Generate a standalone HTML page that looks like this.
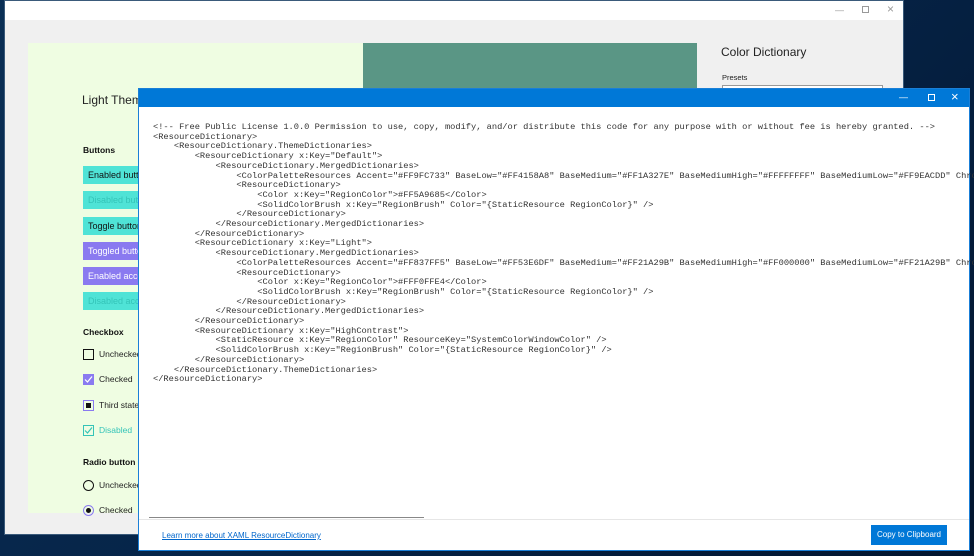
<!DOCTYPE html>
<html><head><meta charset="utf-8"><style>
*{margin:0;padding:0;box-sizing:border-box}
body{width:974px;height:556px;overflow:hidden;background:linear-gradient(135deg,#0a2f55 0%,#062448 50%,#03152e 100%);font-family:"Liberation Sans",sans-serif;position:relative}
.abs{position:absolute}
#back{left:4px;top:0;width:900px;height:535px;background:#f0f0f0;border:1px solid #3a5a7a}
#backtitle{left:0;top:0;width:100%;height:19px;background:#fff}
#green{left:23px;top:42px;width:335px;height:470px;background:#effde2}
#teal{left:358px;top:42px;width:334px;height:230px;background:#5a9685}
.btn{position:absolute;left:78px;width:70px;height:18px;font-size:9px;line-height:18px;padding-left:5px;color:#111;white-space:nowrap;overflow:hidden}
.t{background:#4fe3d6}.p{background:#8a7af0;color:#fff}.d{color:#34c4b8}
.lbl{position:absolute;left:78px;font-size:8.5px;color:#111;font-weight:bold}
.cb{position:absolute;left:78px;font-size:8.5px;color:#222;white-space:nowrap}
.box{display:inline-block;width:11px;height:11px;border:1.5px solid #111;vertical-align:middle;margin-right:5px;position:relative}
.box svg{position:absolute;left:0;top:0}
#front{left:138px;top:88px;width:832px;height:463px;background:#fff;border:1px solid #1a7fd7}
#ftitle{left:0;top:0;width:100%;height:18px;background:#0078d7}
pre{position:absolute;left:14px;top:34px;font-family:"Liberation Mono",monospace;font-size:8.7px;line-height:9.7px;color:#333;white-space:pre}
</style></head><body>
<div id="back" class="abs">
 <div id="backtitle" class="abs"></div>
 <div class="abs" style="left:830px;top:4px;font-size:9px;color:#999">—</div>
 <div class="abs" style="left:857px;top:5px;width:7px;height:7px;border:1px solid #999"></div>
 <div class="abs" style="left:882px;top:1px;font-size:12px;color:#999">×</div>
 <div id="green" class="abs"></div>
 <div id="teal" class="abs"></div>
 <div class="abs" style="left:716px;top:44px;font-size:12px;color:#222">Color Dictionary</div>
 <div class="abs" style="left:717px;top:72px;font-size:7.5px;color:#222">Presets</div>
 <div class="abs" style="left:717px;top:84px;width:161px;height:10px;border:1px solid #999;background:#fff"></div>
 <div class="abs" style="left:77px;top:92px;font-size:12px;color:#222">Light Theme</div>
 <div class="lbl" style="top:144px">Buttons</div>
 <div class="btn t" style="top:165px">Enabled button</div>
 <div class="btn t d" style="top:190px">Disabled button</div>
 <div class="btn t" style="top:216px">Toggle button</div>
 <div class="btn p" style="top:241px">Toggled button</div>
 <div class="btn p" style="top:266px">Enabled accent</div>
 <div class="btn t d" style="top:291px">Disabled accent</div>
 <div class="lbl" style="top:326px">Checkbox</div>
 <div class="cb" style="top:348px"><span class="box"></span>Unchecked</div>
 <div class="cb" style="top:373px"><span class="box" style="background:#8a7af0;border-color:#8a7af0"><svg width="9" height="9" viewBox="0 0 9 9"><path d="M1 4.5 L3.5 7 L8 1.5" stroke="#fff" stroke-width="1.2" fill="none"/></svg></span>Checked</div>
 <div class="cb" style="top:399px"><span class="box" style="border-color:#8a7af0"><span style="position:absolute;left:2px;top:2px;width:5px;height:5px;background:#111"></span></span>Third state</div>
 <div class="cb" style="top:424px;color:#34c4b8"><span class="box" style="border-color:#34c4b8"><svg width="9" height="9" viewBox="0 0 9 9"><path d="M1 4.5 L3.5 7 L8 1.5" stroke="#34c4b8" stroke-width="1.2" fill="none"/></svg></span>Disabled</div>
 <div class="lbl" style="top:456px">Radio button</div>
 <div class="cb" style="top:479px"><span class="box" style="border-radius:50%"></span>Unchecked</div>
 <div class="cb" style="top:504px"><span class="box" style="border-radius:50%;border-color:#8a7af0"><span style="position:absolute;left:2px;top:2px;width:5px;height:5px;border-radius:50%;background:#111"></span></span>Checked</div>
</div>
<div id="front" class="abs">
 <div id="ftitle" class="abs"></div>
 <div class="abs" style="left:760px;top:3px;font-size:9px;color:#fff">—</div>
 <div class="abs" style="left:789px;top:5px;width:7px;height:7px;border:1px solid #fff"></div>
 <div class="abs" style="left:812px;top:0px;font-size:13px;color:#fff">×</div>
<pre>&lt;!-- Free Public License 1.0.0 Permission to use, copy, modify, and/or distribute this code for any purpose with or without fee is hereby granted. --&gt;
&lt;ResourceDictionary&gt;
    &lt;ResourceDictionary.ThemeDictionaries&gt;
        &lt;ResourceDictionary x:Key="Default"&gt;
            &lt;ResourceDictionary.MergedDictionaries&gt;
                &lt;ColorPaletteResources Accent="#FF9FC733" BaseLow="#FF4158A8" BaseMedium="#FF1A327E" BaseMediumHigh="#FFFFFFFF" BaseMediumLow="#FF9EACDD" Chro
                &lt;ResourceDictionary&gt;
                    &lt;Color x:Key="RegionColor"&gt;#FF5A9685&lt;/Color&gt;
                    &lt;SolidColorBrush x:Key="RegionBrush" Color="{StaticResource RegionColor}" /&gt;
                &lt;/ResourceDictionary&gt;
            &lt;/ResourceDictionary.MergedDictionaries&gt;
        &lt;/ResourceDictionary&gt;
        &lt;ResourceDictionary x:Key="Light"&gt;
            &lt;ResourceDictionary.MergedDictionaries&gt;
                &lt;ColorPaletteResources Accent="#FF837FF5" BaseLow="#FF53E6DF" BaseMedium="#FF21A29B" BaseMediumHigh="#FF000000" BaseMediumLow="#FF21A29B" Chro
                &lt;ResourceDictionary&gt;
                    &lt;Color x:Key="RegionColor"&gt;#FFF0FFE4&lt;/Color&gt;
                    &lt;SolidColorBrush x:Key="RegionBrush" Color="{StaticResource RegionColor}" /&gt;
                &lt;/ResourceDictionary&gt;
            &lt;/ResourceDictionary.MergedDictionaries&gt;
        &lt;/ResourceDictionary&gt;
        &lt;ResourceDictionary x:Key="HighContrast"&gt;
            &lt;StaticResource x:Key="RegionColor" ResourceKey="SystemColorWindowColor" /&gt;
            &lt;SolidColorBrush x:Key="RegionBrush" Color="{StaticResource RegionColor}" /&gt;
        &lt;/ResourceDictionary&gt;
    &lt;/ResourceDictionary.ThemeDictionaries&gt;
&lt;/ResourceDictionary&gt;</pre>
 <div class="abs" style="left:10px;top:428px;width:275px;height:1px;background:#888"></div>
 <div class="abs" style="left:0;top:430px;width:100%;height:1px;background:#e6e6e6"></div>
 <div class="abs" style="left:23px;top:442px;font-size:8px;color:#0066cc;text-decoration:underline">Learn more about XAML ResourceDictionary</div>
 <div class="abs" style="left:732px;top:436px;width:76px;height:20px;background:#0078d7;color:#fff;font-size:8px;line-height:20px;text-align:center">Copy to Clipboard</div>
</div>
</body></html>
